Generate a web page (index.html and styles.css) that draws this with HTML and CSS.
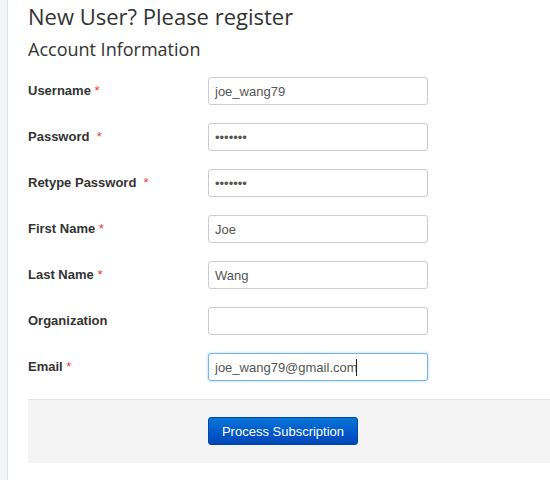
FILE: index.html
```html
<!DOCTYPE html>
<html>
<head>
<meta charset="utf-8">
<link rel="stylesheet" href="styles.css">
</head>
<body>
<div class="page">
  <div class="strip"></div>
  <main class="main">
    <h1 class="title">New User? Please register</h1>
    <h2 class="subtitle">Account Information</h2>
    <form class="form">
      <div class="row">
        <label class="label">Username <span class="req">*</span></label>
        <input class="field" type="text" value="joe_wang79">
      </div>
      <div class="row">
        <label class="label">Password &nbsp;<span class="req">*</span></label>
        <input class="field" type="password" value="abcdefg">
      </div>
      <div class="row">
        <label class="label">Retype Password &nbsp;<span class="req">*</span></label>
        <input class="field" type="password" value="abcdefg">
      </div>
      <div class="row">
        <label class="label">First Name <span class="req">*</span></label>
        <input class="field" type="text" value="Joe">
      </div>
      <div class="row">
        <label class="label">Last Name <span class="req">*</span></label>
        <input class="field" type="text" value="Wang">
      </div>
      <div class="row">
        <label class="label">Organization</label>
        <input class="field" type="text" value="">
      </div>
      <div class="row">
        <label class="label">Email <span class="req">*</span></label>
        <span class="field-wrap">
          <input class="field focused" type="text" value="joe_wang79@gmail.com">
          <span class="caret"></span>
        </span>
      </div>
      <div class="actions">
        <button class="btn" type="button">Process Subscription</button>
      </div>
    </form>
  </main>
</div>
</body>
</html>
```

FILE: styles.css
```css
html, body {
  margin: 0;
  padding: 0;
  background: #fff;
}
.page {
  display: flex;
  min-height: 480px;
}
.strip {
  width: 7px;
  flex: 0 0 7px;
  background: #f3f4f6;
  border-right: 1px solid #e2e3e5;
}
.main {
  flex: 1;
  padding-left: 20px;
  font-family: "Liberation Sans", Arial, sans-serif;
  color: #333;
}
.title {
  margin: 0;
  font-family: "Open Sans", sans-serif;
  font-weight: 400;
  font-size: 22px;
  line-height: 32px;
  color: #333;
}
.subtitle {
  margin: 5px 0 0 0;
  font-family: "Open Sans", sans-serif;
  font-weight: 400;
  font-size: 18px;
  line-height: 24px;
  color: #333;
}
.form {
  margin-top: 16px;
  display: flex;
  flex-direction: column;
  gap: 18px;
}
.row {
  display: flex;
  align-items: center;
  height: 28px;
}
.label {
  width: 180px;
  flex: 0 0 180px;
  font-weight: 700;
  font-size: 13px;
  line-height: 16px;
  margin-top: -1px;
  color: #333;
  white-space: pre;
}
.req {
  color: #ee3a3a;
  font-weight: 400;
}
.field-wrap {
  position: relative;
  display: inline-block;
}
.field {
  box-sizing: border-box;
  width: 220px;
  height: 28px;
  margin: 0;
  padding: 0 6px;
  border: 1px solid #cccccc;
  border-radius: 3px;
  font-family: "Liberation Sans", Arial, sans-serif;
  font-size: 13px;
  color: #555;
  background: #fff;
  outline: none;
}
.field.focused {
  border-color: #73b4ea;
  box-shadow: 0 0 3px rgba(102, 175, 233, 0.6);
}
.caret {
  position: absolute;
  left: 148px;
  top: 6px;
  width: 1px;
  height: 17px;
  background: #222;
}
.actions {
  margin-top: 0;
  margin-right: -20px;
  background: #f4f4f4;
  border-top: 1px solid #e3e3e3;
  padding: 17px 0 18px 180px;
}
.btn {
  box-sizing: border-box;
  width: 150px;
  height: 28px;
  padding: 0;
  border: 1px solid #0245a8;
  border-radius: 3px;
  background: linear-gradient(to bottom, #0a76d8 0%, #0256c8 60%, #0146b8 100%);
  color: #fff;
  font-family: "Liberation Sans", Arial, sans-serif;
  font-size: 13px;
  display: block;
}
```
